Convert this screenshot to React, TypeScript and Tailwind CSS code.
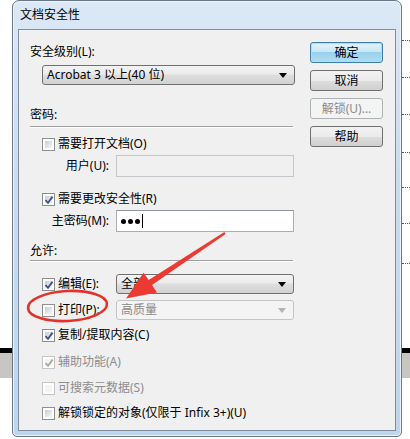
import React from 'react'

const font = "font-['Noto_Sans','Noto_Sans_CJK_SC',sans-serif]"

function CheckBox({ checked, disabled }: { checked?: boolean; disabled?: boolean }) {
  return <div className={`relative w-[13px] h-[13px] shrink-0 border bg-white p-[2px] ${disabled ? 'border-[#c5c5c5]' : 'border-[#8e8f8f]'}`}>
    <div className={`w-full h-full ${disabled ? 'bg-[#f4f4f4]' : 'bg-[linear-gradient(135deg,#c9ccd1_0%,#e4e6e9_60%,#f7f7f7_100%)]'}`} />
    {checked ? <svg className="absolute left-[1px] top-[1px]" width="10" height="10" viewBox="0 0 10 10">
      <path d="M1.5 5 L4 7.8 L8.6 1.6" fill="none" stroke={disabled ? '#a9a9a9' : '#3d4f8f'} strokeWidth="1.8" />
    </svg> : null}
  </div>
}

function Combo({ text, disabled, w }: { text: string; disabled?: boolean; w: string }) {
  return <div className={`${w} h-[20px] rounded-[3px] border flex items-center pl-[4px] pr-[7px] ${disabled
    ? 'border-[#c2c4c6] bg-[#f4f4f4] text-[#8a8a8a]'
    : 'border-[#707070] bg-[linear-gradient(to_bottom,#f3f3f3_0%,#ebebeb_45%,#dedede_50%,#d2d2d2_100%)] text-black'}`}>
    <span className="flex-1 text-[12px] leading-[14px] whitespace-nowrap">{text}</span>
    <svg width="8" height="5" viewBox="0 0 8 5">
      <polygon points="0,0 8,0 4,5" fill={disabled ? '#b3b3b3' : '#000'} />
    </svg>
  </div>
}

function Btn({ children, focus, disabled }: { children: React.ReactNode; focus?: boolean; disabled?: boolean }) {
  const look = focus
    ? 'border-[#3c7fb1] bg-[linear-gradient(to_bottom,#e5f4fc_0%,#c4e5f6_50%,#98d1ef_50%,#b2dcf1_100%)] shadow-[inset_0_0_0_1px_#a8def6] text-black'
    : disabled
      ? 'border-[#adb2b5] bg-[#f4f4f4] text-[#8b8b8b]'
      : 'border-[#707070] bg-[linear-gradient(to_bottom,#f2f2f2_0%,#ebebeb_50%,#dddddd_50%,#cfcfcf_100%)] text-black'
  return <div className={`h-[21px] w-[73px] rounded-[3px] border flex items-center justify-center text-[12px] leading-[14px] ${look}`}>
    {children}
  </div>
}

function Sep() {
  return <div className="w-[263px] h-[2px] border-t border-t-[#a0a0a0] border-b border-b-white" />
}

function CheckRow({ label, checked, disabled, mt }: { label: string; checked?: boolean; disabled?: boolean; mt: string }) {
  return <div className={`${mt} h-[14px] flex items-center gap-[3px] pl-[12px]`}>
    <CheckBox checked={checked} disabled={disabled} />
    <span className={`text-[12px] leading-[14px] whitespace-nowrap ${disabled ? 'text-[#8d8d8d]' : 'text-black'}`}>{label}</span>
  </div>
}

function Field({ label, children, mt }: { label: string; children: React.ReactNode; mt: string }) {
  return <div className={`${mt} h-[22px] flex items-center`}>
    <span className="w-[80px] text-right text-[12px] leading-[14px] pr-[1px]">{label}</span>
    <div className="ml-[6px]">{children}</div>
  </div>
}

export default function App() {
  const dots = [40, 77, 114, 152, 187, 223, 263]
  return <div className={`relative w-[410px] h-[439px] bg-white overflow-hidden ${font}`}>
    {/* stuff behind the dialog */}
    {dots.map(y => <div key={y} className="absolute left-[402px] w-[8px] border-t border-dotted border-[#555]" style={{ top: y }} />)}
    <div className="absolute left-0 top-[348px] w-full h-[5px] bg-black" />
    <div className="absolute left-0 top-[353px] w-full h-[25px] bg-[#c8c6c1]" />

    {/* dialog window */}
    <div className="relative ml-[12px] w-[390px] h-[437px] rounded-t-[7px] rounded-b-[5px] border border-[#6b7785] bg-[linear-gradient(to_bottom,#dbe8f6_0%,#cadcf0_40%,#bfd5ec_100%)] shadow-[inset_0_0_0_1px_#eaf2fb] flex flex-col">
      <div className="h-[28px] pl-[7px] flex items-center text-[12px] leading-[14px] text-black">文档安全性</div>
      <div className="ml-[5px] w-[378px] h-[402px] border border-[#7f8e9e] bg-[#f0f0f0] flex">
        {/* left column */}
        <div className="pl-[11px] w-[276px] flex flex-col">
          <div className="mt-[14px] h-[16px] flex items-center text-[12px] leading-[14px]">安全级别(L):</div>
          <div className="mt-[5px] ml-[12px]"><Combo text="Acrobat 3 以上(40 位)" w="w-[253px]" /></div>

          <div className="mt-[22px] h-[16px] flex items-center text-[12px] leading-[14px]">密码:</div>
          <div className="mt-[3px]"><Sep /></div>
          <CheckRow mt="mt-[9px]" label="需要打开文档(O)" />
          <Field mt="mt-[4px]" label="用户(U):">
            <div className="w-[178px] h-[22px] border border-[#c2c5ca] bg-[#f0f0f0]" />
          </Field>
          <CheckRow mt="mt-[15px]" label="需要更改安全性(R)" checked />
          <Field mt="mt-[4px]" label="主密码(M):">
            <div className="w-[178px] h-[22px] border border-[#abadb3] border-t-[#8f939b] bg-white flex items-center pl-[4px] gap-[2px]">
              <span className="w-[5px] h-[5px] rounded-full bg-black" />
              <span className="w-[5px] h-[5px] rounded-full bg-black" />
              <span className="w-[5px] h-[5px] rounded-full bg-black" />
              <span className="w-[1px] h-[14px] bg-black" />
            </div>
          </Field>

          <div className="mt-[11px] h-[16px] flex items-center text-[12px] leading-[14px]">允许:</div>
          <div className="mt-[1px]"><Sep /></div>
          <div className="mt-[12px] h-[20px] flex items-center pl-[12px]">
            <CheckBox checked />
            <span className="ml-[3px] w-[58px] text-[12px] leading-[14px]">编辑(E):</span>
            <Combo text="全部" w="w-[178px]" />
          </div>
          <div className="mt-[6px] h-[20px] flex items-center pl-[12px]">
            <CheckBox />
            <span className="ml-[3px] w-[58px] text-[12px] leading-[14px]">打印(P):</span>
            <Combo text="高质量" w="w-[178px]" disabled />
          </div>
          <CheckRow mt="mt-[8px]" label="复制/提取内容(C)" checked />
          <CheckRow mt="mt-[13px]" label="辅助功能(A)" checked disabled />
          <CheckRow mt="mt-[12px]" label="可搜索元数据(S)" disabled />
          <CheckRow mt="mt-[11px]" label="解锁锁定的对象(仅限于 Infix 3+)(U)" />
        </div>

        {/* buttons */}
        <div className="ml-[15px] mt-[12px] flex flex-col gap-[7px]">
          <Btn focus>确定</Btn>
          <Btn>取消</Btn>
          <Btn disabled>解锁(U)...</Btn>
          <Btn>帮助</Btn>
        </div>
      </div>
    </div>

    {/* red annotation */}
    <svg className="absolute left-0 top-0 pointer-events-none" width="410" height="439" viewBox="0 0 410 439">
      <ellipse cx="67.5" cy="306" rx="39.5" ry="15" fill="none" stroke="#e4322b" strokeWidth="2.6" transform="rotate(-3 67.5 306)" />
      <polygon points="225.6,234 224.4,232 148.7,280 143.5,272.8 126,298.5 157,292.5 152,285" fill="#ec3a33" />
    </svg>
  </div>
}
